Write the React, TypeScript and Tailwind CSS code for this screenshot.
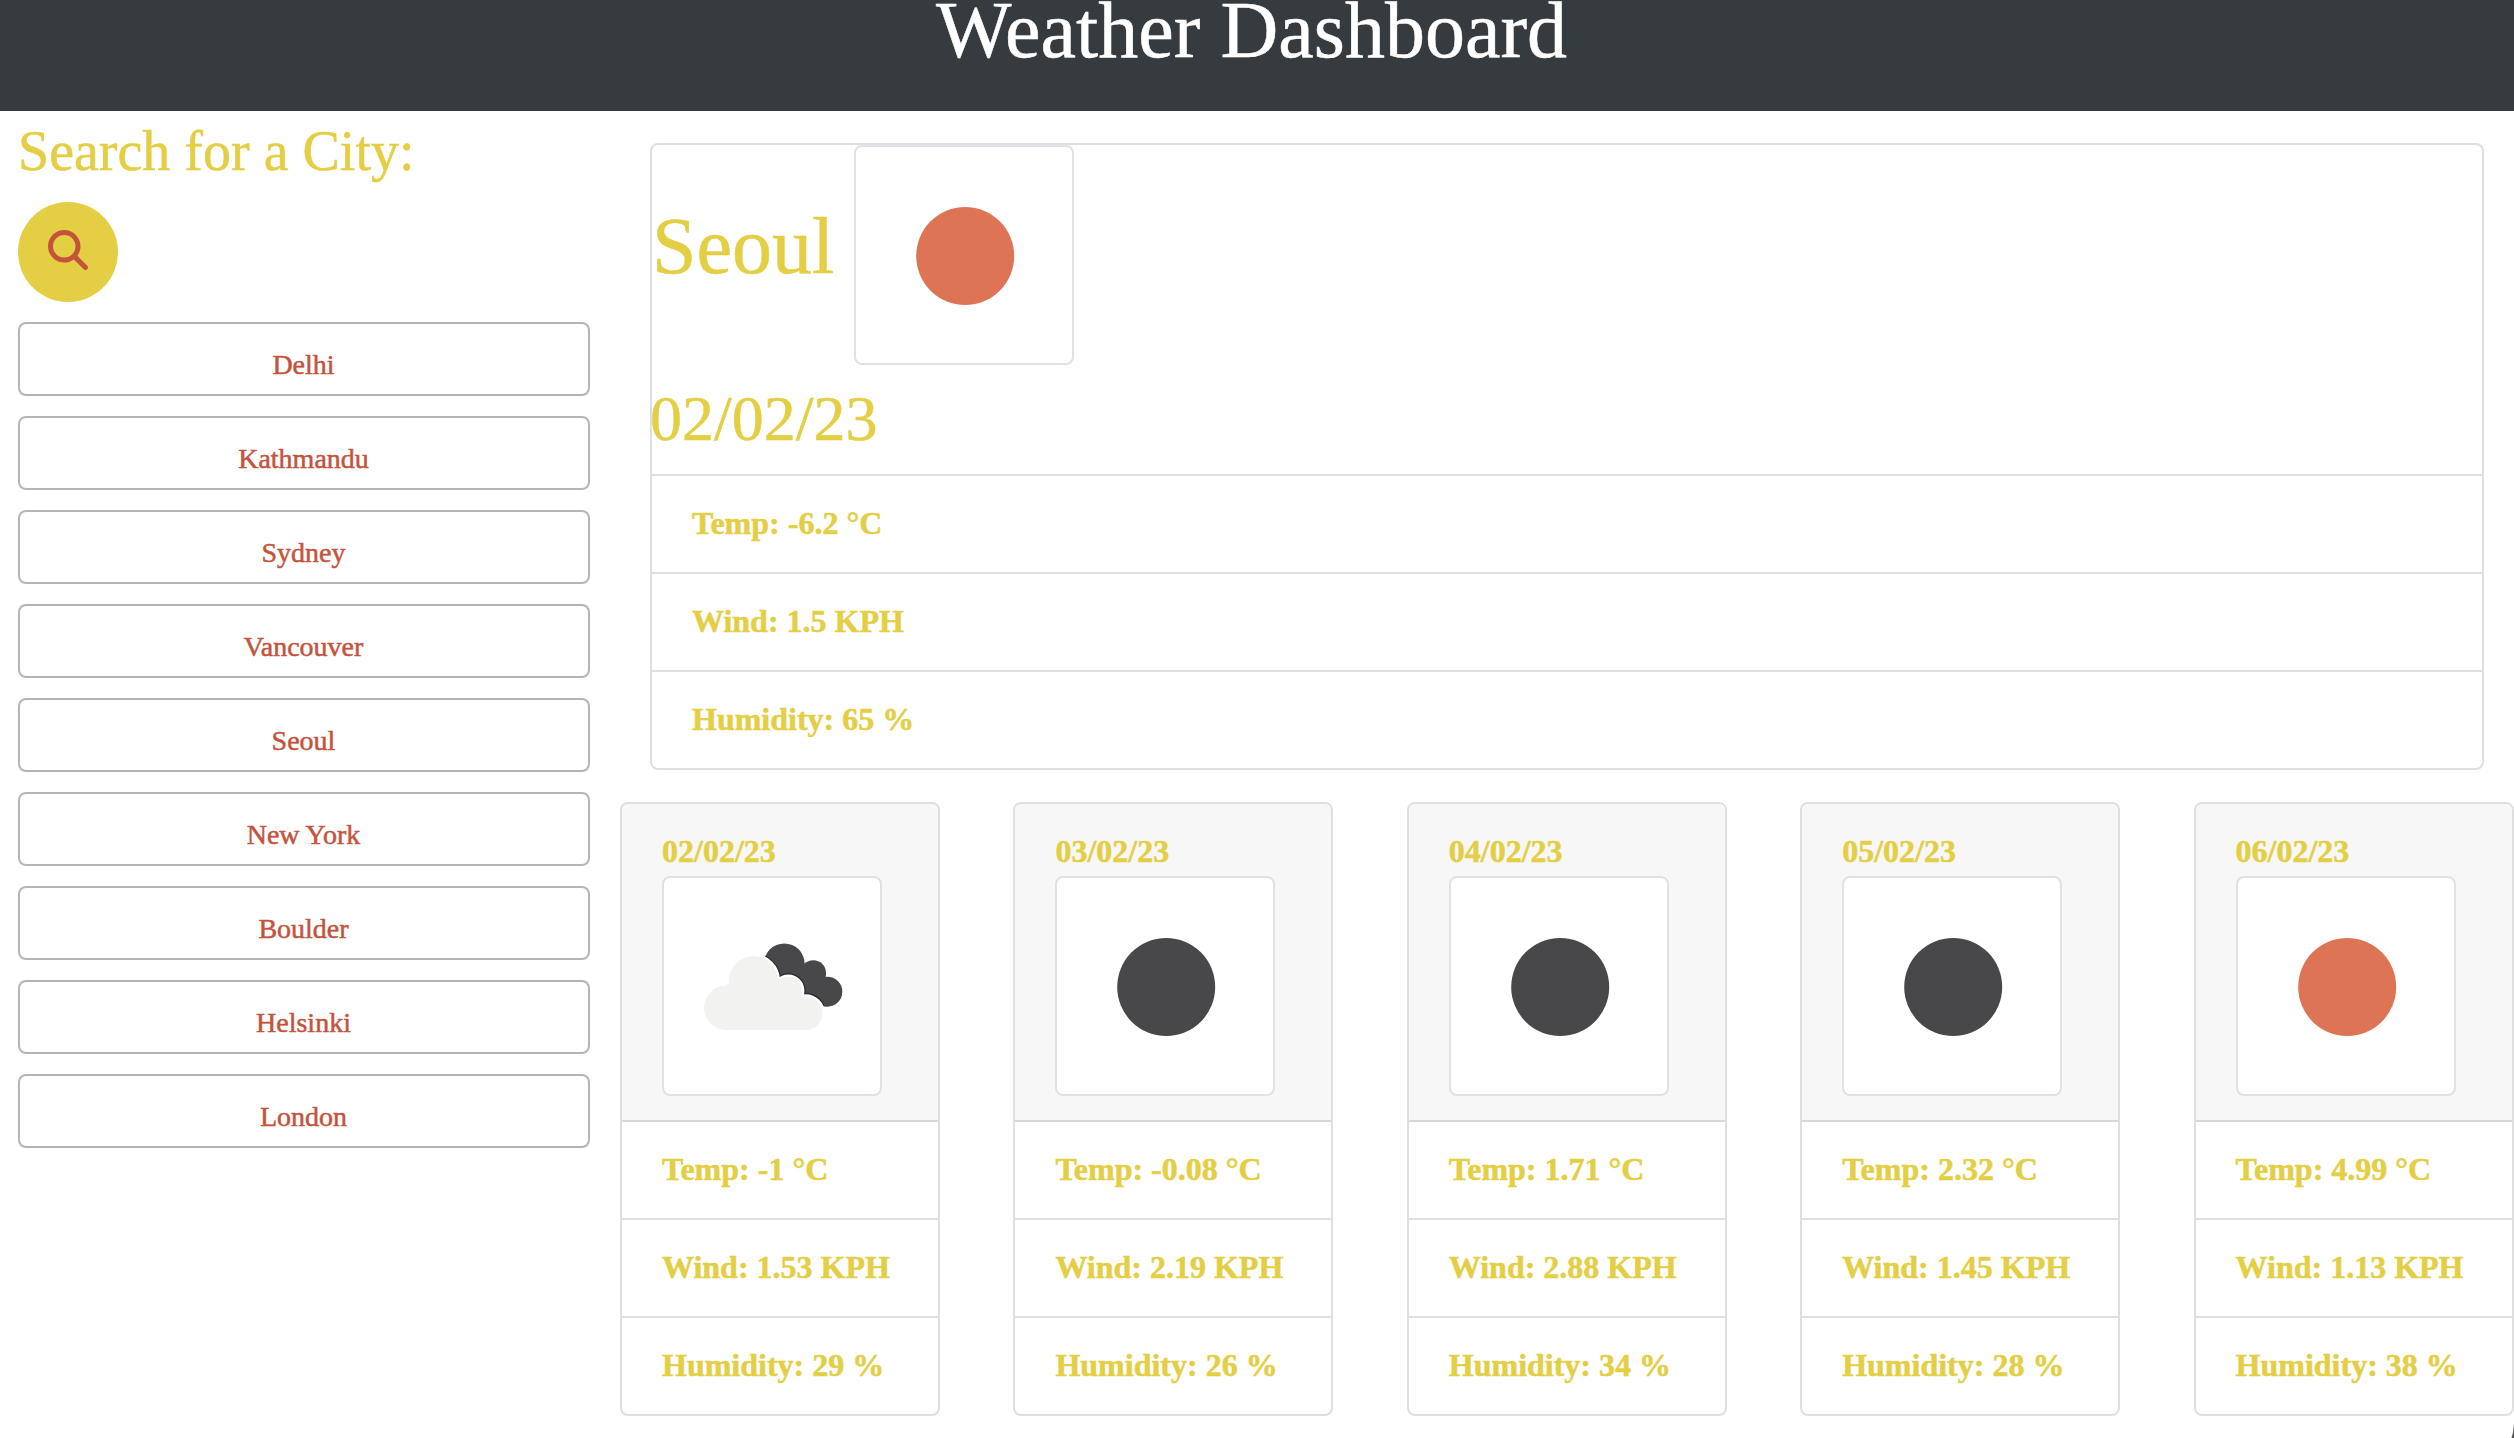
import React from "react";

const cities = ["Delhi", "Kathmandu", "Sydney", "Vancouver", "Seoul", "New York", "Boulder", "Helsinki", "London"];

type Icon = "sun" | "night" | "clouds";

const forecast: { date: string; icon: Icon; temp: string; wind: string; humidity: string }[] = [
  { date: "02/02/23", icon: "clouds", temp: "-1", wind: "1.53", humidity: "29" },
  { date: "03/02/23", icon: "night", temp: "-0.08", wind: "2.19", humidity: "26" },
  { date: "04/02/23", icon: "night", temp: "1.71", wind: "2.88", humidity: "34" },
  { date: "05/02/23", icon: "night", temp: "2.32", wind: "1.45", humidity: "28" },
  { date: "06/02/23", icon: "sun", temp: "4.99", wind: "1.13", humidity: "38" },
];

function FrontCloud() {
  return (
    <>
      <circle cx="62.3" cy="129.7" r="22.3" />
      <circle cx="89.3" cy="102.7" r="24.5" />
      <circle cx="124.3" cy="112.7" r="13.9" />
      <circle cx="141.7" cy="135.3" r="16.8" />
      <path d="M62.3 152V107L89 90L124 105L136 120L141.7 152Z" />
    </>
  );
}

function BackCloud() {
  return (
    <>
      <circle cx="120.3" cy="85.7" r="20.3" />
      <circle cx="149.3" cy="95" r="12.8" />
      <circle cx="163.3" cy="113.7" r="15" />
      <path d="M104 82L138 83L142 87L160 100L163 128.7L150 124L110 100Z" />
    </>
  );
}

function WeatherIcon({ icon }: { icon: Icon }) {
  return (
    <div className="size-[220px] shrink-0 rounded-lg border-2 border-[#dee2e6] bg-white">
      <svg viewBox="0 0 216 216" className="block size-full">
        {icon === "clouds" ? (
          <>
            <defs>
              <clipPath id="back-cloud">
                <BackCloud />
              </clipPath>
            </defs>
            <g fill="#48484a">
              <BackCloud />
            </g>
            <g clipPath="url(#back-cloud)" fill="#29292b" stroke="#29292b" strokeWidth="7">
              <FrontCloud />
            </g>
            <g fill="white" stroke="white" strokeWidth="4.5">
              <FrontCloud />
            </g>
            <g fill="#f2f2f0">
              <FrontCloud />
            </g>
          </>
        ) : (
          <circle cx="109.2" cy="109" r="49" fill={icon === "sun" ? "#de7456" : "#48484a"} />
        )}
      </svg>
    </div>
  );
}

function Readings({ temp, wind, humidity }: { temp: string; wind: string; humidity: string }) {
  return (
    <ul className="divide-y-2 divide-[#dfdfdf] text-[32px] leading-[48px] font-bold">
      <li className="px-10 pt-[23px] pb-[25px]">Temp: {temp} °C</li>
      <li className="px-10 pt-[23px] pb-[25px]">Wind: {wind} KPH</li>
      <li className="px-10 pt-[23px] pb-[25px]">Humidity: {humidity} %</li>
    </ul>
  );
}

export default function App() {
  return (
    <div className="relative h-[1438px] w-[2514px] overflow-hidden bg-white font-['Liberation_Serif',serif] text-[#e3ce44] [-webkit-text-stroke:0.5px]">
      <header className="flex h-[111px] justify-center bg-[#363b3f] pr-[11px] text-white">
        <h1 className="text-[80px] leading-[60px]">Weather Dashboard</h1>
      </header>

      <div className="flex">
        <aside className="w-[620px] pt-[15px] pr-[30px] pl-[18px]">
          <h2 className="text-[56px] leading-[50px]">Search for a City:</h2>
          <button className="mt-[26px] flex size-[100px] items-center justify-center rounded-full bg-[#e3ce44]">
            <svg viewBox="0 0 512 512" className="mb-1 size-10" fill="#c4533b">
              <path d="M416 208c0 45.9-14.9 88.3-40 122.7L502.6 457.4c12.5 12.5 12.5 32.8 0 45.3s-32.8 12.5-45.3 0L330.7 376c-34.4 25.2-76.8 40-122.7 40C93.1 416 0 322.9 0 208S93.1 0 208 0S416 93.1 416 208zM208 352a144 144 0 1 0 0-288 144 144 0 1 0 0 288z" />
            </svg>
          </button>
          <div className="mt-5 flex flex-col gap-5">
            {cities.map((city) => (
              <button
                key={city}
                className="h-[74px] rounded-lg border-2 border-[#b5b5b5] pt-[11px] pr-[1px] text-[28px] leading-none text-[#c4533b]"
              >
                {city}
              </button>
            ))}
          </div>
        </aside>

        <main className="w-[1894px]">
          <section className="mt-8 mr-[30px] ml-[30px] h-[627px] rounded-lg border-2 border-[#dfdfdf]">
            <div className="flex gap-5">
              <h2 className="w-[182px] pt-[53px] text-[80px] leading-[96px]">Seoul</h2>
              <WeatherIcon icon="sun" />
            </div>
            <div className="h-[111px] border-b-2 border-[#dfdfdf] pt-4">
              <h3 className="-ml-0.5 text-[64px] leading-[76px]">02/02/23</h3>
            </div>
            <Readings temp="-6.2" wind="1.5" humidity="65" />
          </section>

          <section className="mt-8 flex gap-[73.4px]">
            {forecast.map((day) => (
              <article key={day.date} className="w-80 shrink-0 overflow-hidden rounded-lg border-2 border-[#dfdfdf]">
                <div className="h-[318px] border-b-2 border-[#d8d8d8] bg-[#f7f7f7] px-10 pt-[23px]">
                  <h4 className="mb-px text-[32px] leading-[48px] font-bold">{day.date}</h4>
                  <WeatherIcon icon={day.icon} />
                </div>
                <Readings temp={day.temp} wind={day.wind} humidity={day.humidity} />
              </article>
            ))}
          </section>
        </main>
      </div>

      <svg viewBox="0 0 4 14" className="absolute right-0 bottom-0 h-3.5 w-1" fill="#555555">
        <path d="M4 0V14H1.5Q3.5 8 4 0Z" />
      </svg>
    </div>
  );
}
